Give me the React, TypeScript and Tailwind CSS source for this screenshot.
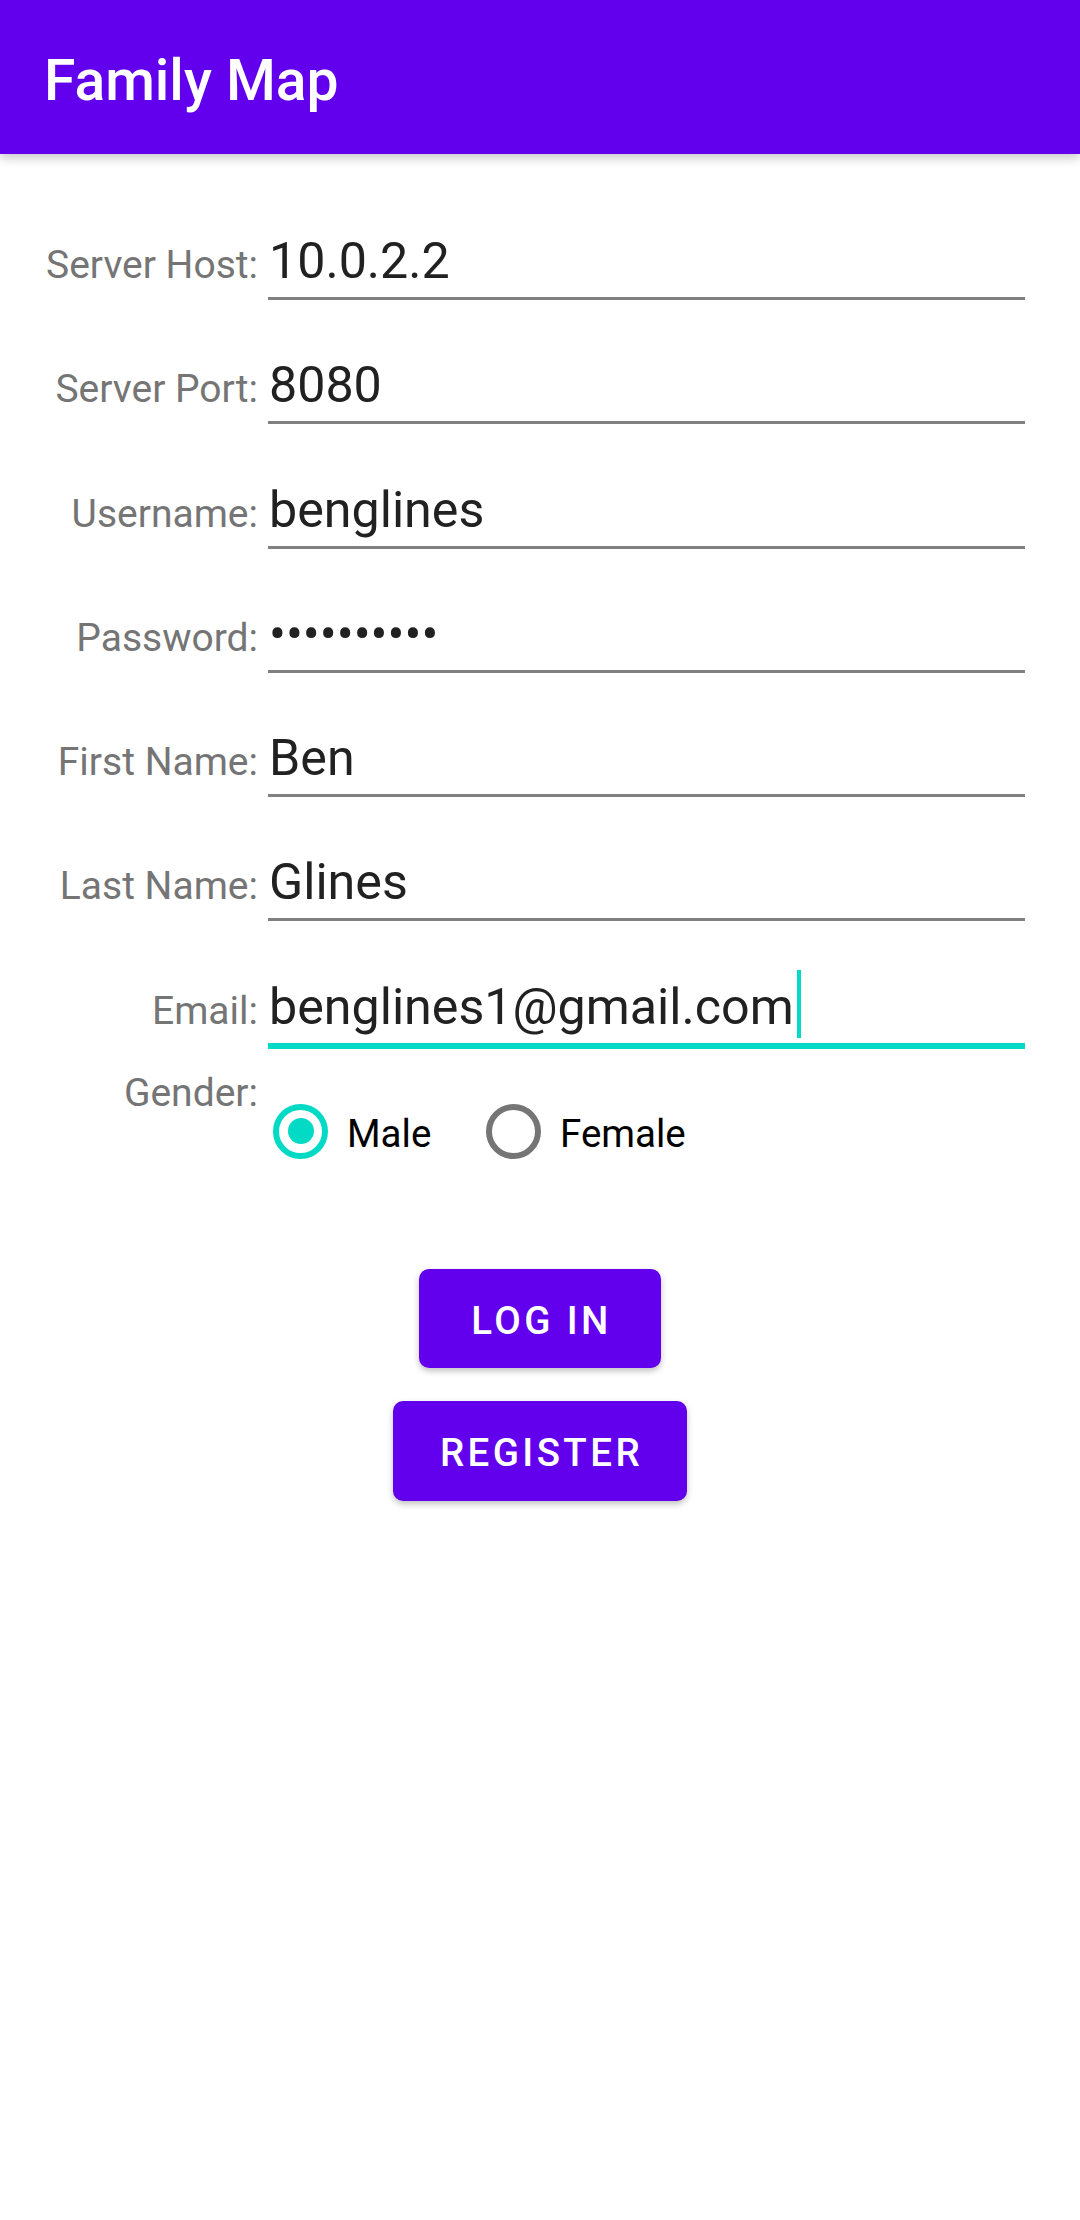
const fields = [
  { label: 'Server Host:', value: '10.0.2.2' },
  { label: 'Server Port:', value: '8080' },
  { label: 'Username:', value: 'benglines' },
  { label: 'Password:', value: '••••••••••' },
  { label: 'First Name:', value: 'Ben' },
  { label: 'Last Name:', value: 'Glines' },
]

function Field({ label, value }: { label: string; value: string }) {
  return (
    <div className="flex items-baseline pr-[55px]">
      <span className="w-[258px] shrink-0 text-right text-[39px] leading-none text-[#757575]">{label}</span>
      <div className="ml-[10px] flex-1 border-b-[3px] border-[#808080] pb-[7px] pl-[1px] text-[50.2px] leading-[58px] text-[#212121]">
        {value}
      </div>
    </div>
  )
}

function Radio({ label, checked }: { label: string; checked?: boolean }) {
  return (
    <div className="flex items-center">
      <div
        className={
          checked
            ? 'flex size-[55px] items-center justify-center rounded-full border-[6px] border-[#03DAC5]'
            : 'flex size-[55px] items-center justify-center rounded-full border-[6px] border-[#757575]'
        }
      >
        {checked && <div className="size-[26px] rounded-full bg-[#03DAC5]" />}
      </div>
      <span className="ml-[19px] pt-[5px] text-[38.5px] leading-[45px] text-black">{label}</span>
    </div>
  )
}

export default function App() {
  return (
    <div className="min-h-[2220px] bg-white font-['Roboto',sans-serif]">
      <header className="relative z-10 h-[154px] bg-[#6200EE] pl-[44px] pt-[52px] shadow-[0_4px_10px_rgba(0,0,0,0.22)]">
        <h1 className="text-[57px] font-medium leading-[57px] text-white">Family Map</h1>
      </header>

      <main className="flex flex-col pt-[78px]">
        <div className="flex flex-col gap-[56.3px]">
          {fields.map((f) => (
            <Field key={f.label} label={f.label} value={f.value} />
          ))}
          <div className="flex items-baseline pr-[55px]">
            <span className="w-[258px] shrink-0 text-right text-[39px] leading-none text-[#757575]">Email:</span>
            <div className="ml-[10px] flex-1 border-b-[6px] border-[#03DAC5] pb-[7px] pl-[1px] text-[50.2px] leading-[58px] text-[#212121]">
              <span className="border-r-[4px] border-[#03DAC5] pb-[2px] pr-[3px] pt-[7px]">benglines1@gmail.com</span>
            </div>
          </div>
        </div>

        <div className="mt-[22.6px] flex items-start">
          <span className="w-[258px] shrink-0 text-right text-[39px] leading-[45px] text-[#757575]">Gender:</span>
          <div className="ml-[15px] mt-[32.6px] flex">
            <div className="w-[213px]">
              <Radio label="Male" checked />
            </div>
            <Radio label="Female" />
          </div>
        </div>

        <div className="mt-[110px] flex flex-col items-center gap-[33px]">
          <button className="flex h-[99px] w-[242px] items-center justify-center rounded-[10px] bg-[#6200EE] pl-[3px] pt-[5px] text-[38.5px] font-medium leading-none tracking-[3.4px] text-white shadow-[0_3px_6px_rgba(0,0,0,0.25)]">
            LOG IN
          </button>
          <button className="flex h-[100px] w-[294px] items-center justify-center rounded-[10px] bg-[#6200EE] pl-[3px] pt-[5px] text-[38.5px] font-medium leading-none tracking-[3.4px] text-white shadow-[0_3px_6px_rgba(0,0,0,0.25)]">
            REGISTER
          </button>
        </div>
      </main>
    </div>
  )
}
